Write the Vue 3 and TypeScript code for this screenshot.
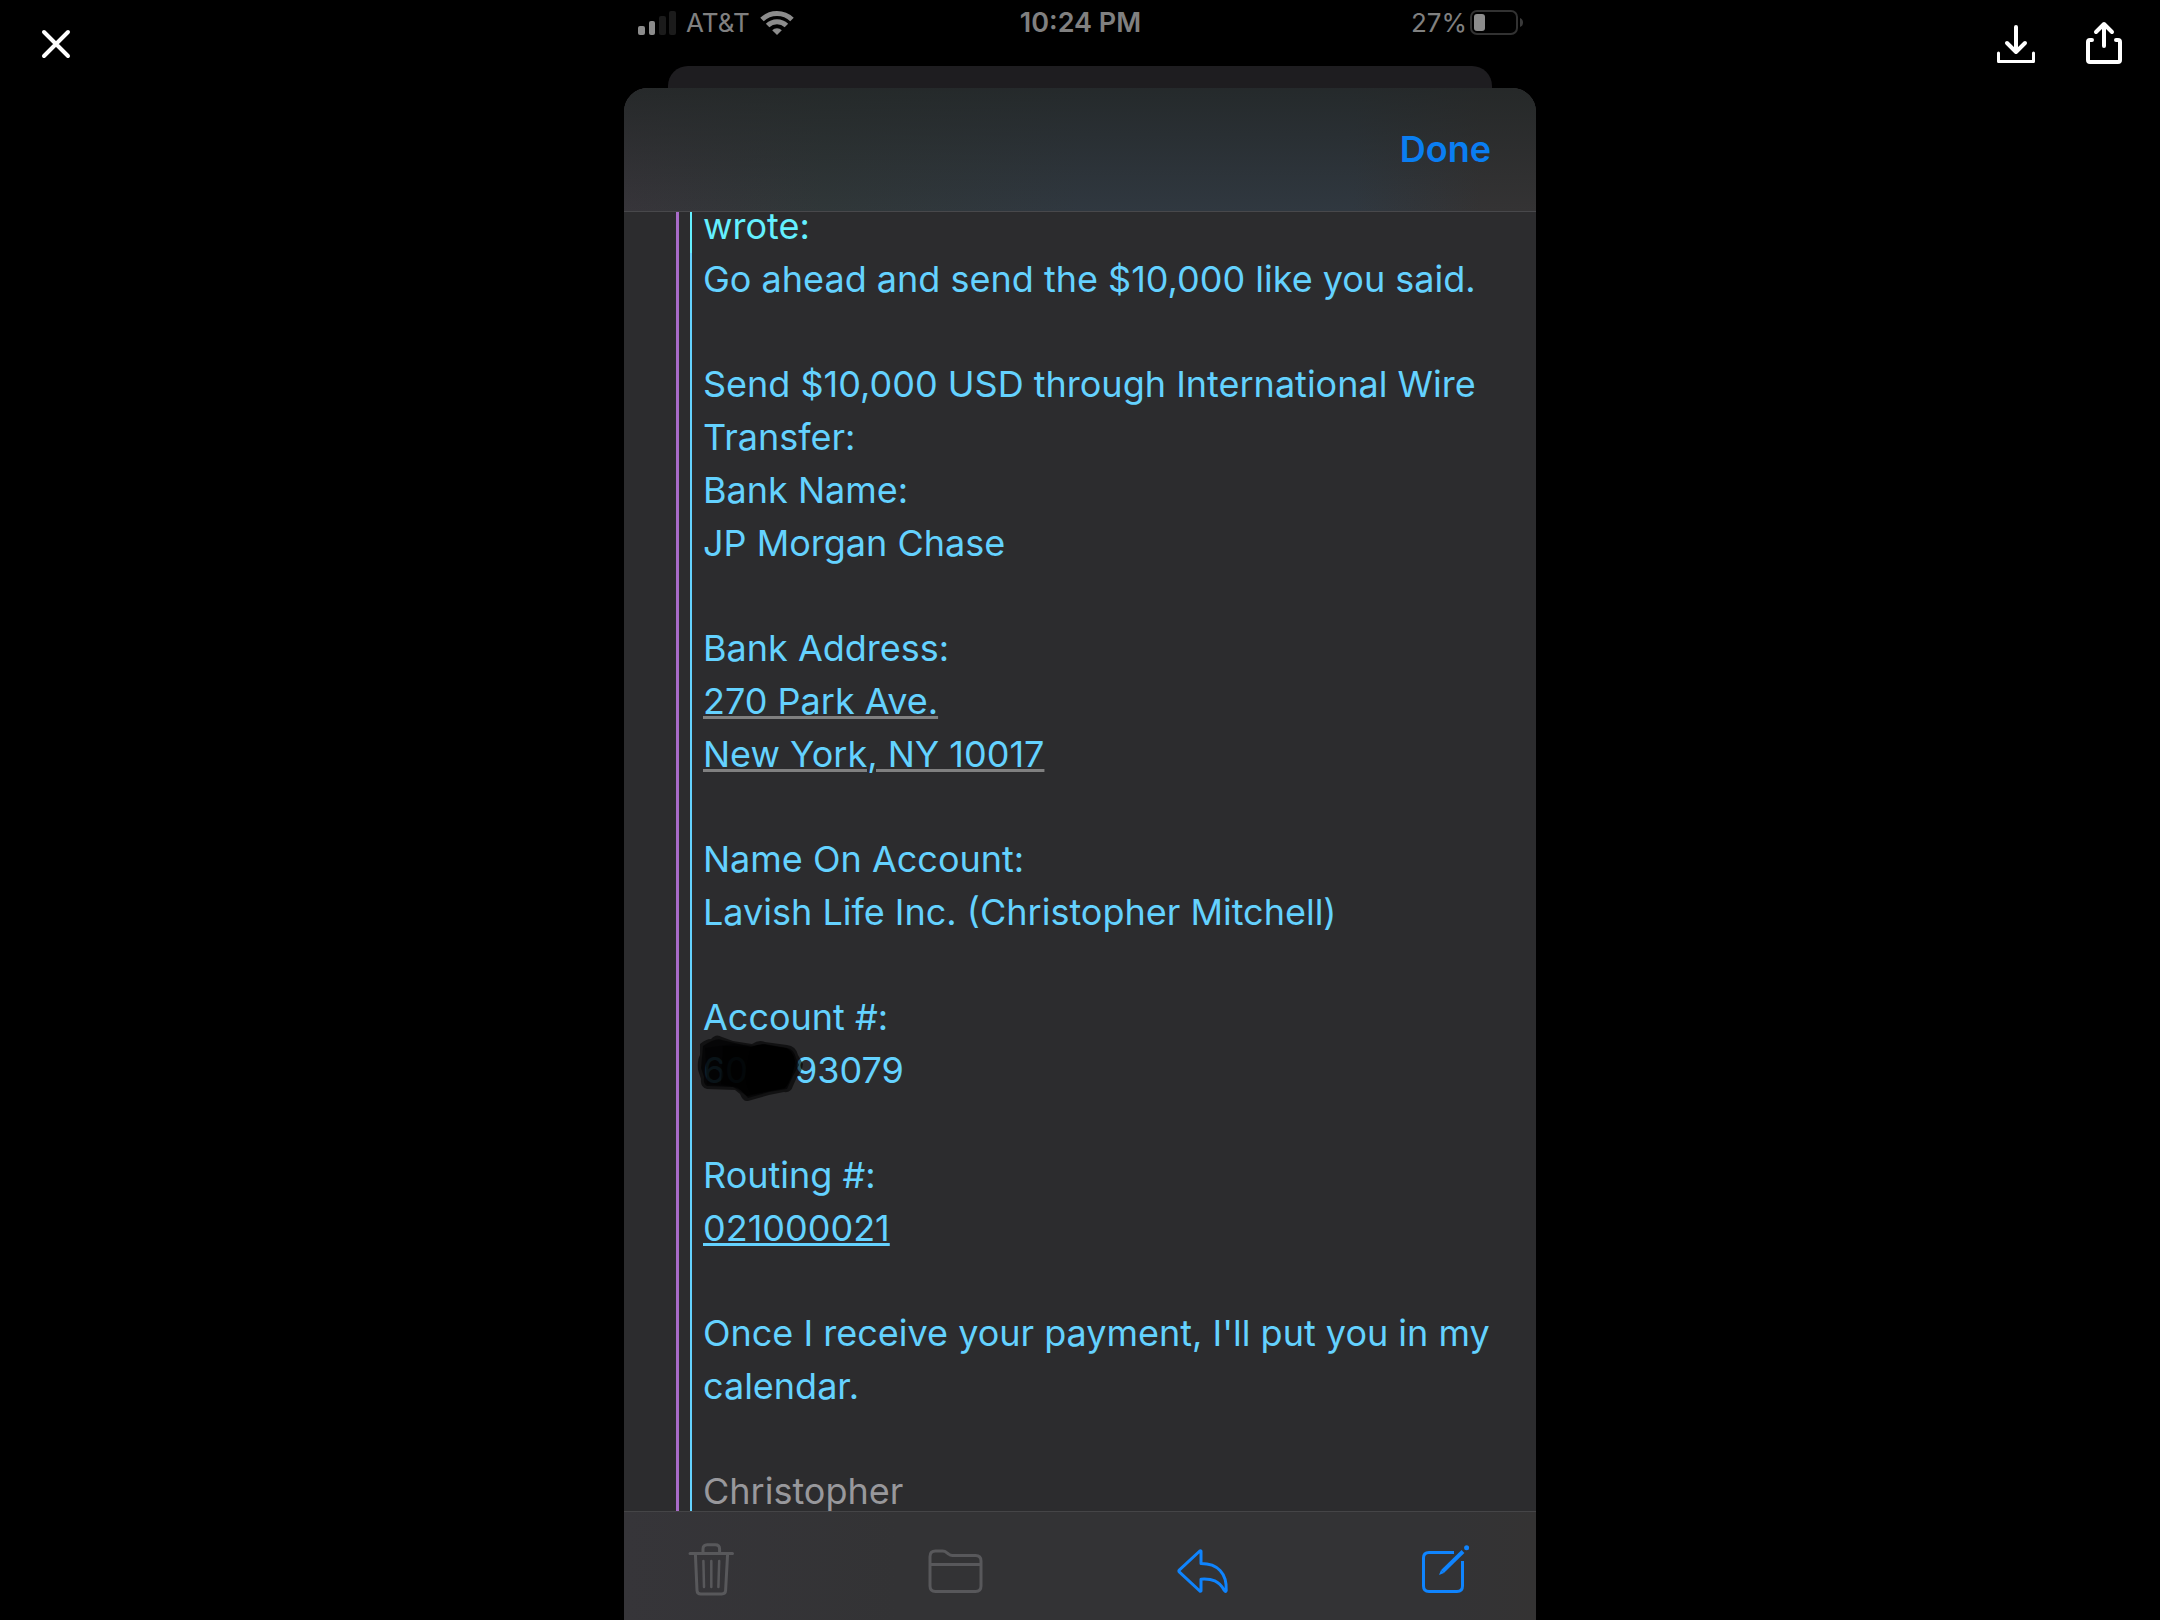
<script setup lang="ts">
interface Line {
  text: string
  kind?: 'address' | 'number' | 'redacted' | 'signature'
}

// Each stanza is a run of lines; an empty line separates two stanzas.
const stanzas: Line[][] = [
  [{ text: 'Go ahead and send the $10,000 like you said.' }],
  [
    { text: 'Send $10,000 USD through International Wire Transfer:' },
    { text: 'Bank Name:' },
    { text: 'JP Morgan Chase' },
  ],
  [
    { text: 'Bank Address:' },
    { text: '270 Park Ave.', kind: 'address' },
    { text: 'New York, NY 10017', kind: 'address' },
  ],
  [
    { text: 'Name On Account:' },
    { text: 'Lavish Life Inc. (Christopher Mitchell)' },
  ],
  [
    { text: 'Account #:' },
    { text: '93079', kind: 'redacted' },
  ],
  [
    { text: 'Routing #:' },
    { text: '021000021', kind: 'number' },
  ],
  [{ text: "Once I receive your payment, I'll put you in my calendar." }],
  [{ text: 'Christopher', kind: 'signature' }],
]
</script>

<template>
  <div class="viewer">
    <div class="side">
      <button class="tool" type="button" aria-label="Close">
        <svg width="40" height="44" viewBox="0 0 40 44" fill="none" stroke="#fff" stroke-width="4" stroke-linecap="round">
          <path d="M8 10l24 24M32 10L8 34" />
        </svg>
      </button>
    </div>

    <main class="phone">
      <div class="status">
        <div class="status-left">
          <svg width="38" height="26" viewBox="0 0 38 26">
            <rect x="0" y="16" width="7" height="9" rx="2" fill="#8c8c8c" />
            <rect x="11" y="11" width="6" height="14" rx="2" fill="#8c8c8c" />
            <rect x="21" y="6" width="7" height="19" rx="2" fill="#1b1b1b" />
            <rect x="31" y="1" width="7" height="24" rx="2" fill="#1b1b1b" />
          </svg>
          <span class="carrier">AT&amp;T</span>
          <svg width="34" height="26" viewBox="0 0 34 26" fill="none" stroke="#8c8c8c" stroke-width="5">
            <path d="M2 9.500A21.500 21.500 0 0 1 32 9.500" />
            <path d="M7.600 15.500A13.500 13.500 0 0 1 26.400 15.500" />
            <path d="M17 25l-4.800-4.800a6.800 6.800 0 0 1 9.600 0z" fill="#8c8c8c" stroke="none" />
          </svg>
        </div>
        <span class="clock">10:24 PM</span>
        <div class="status-right">
          <span>27%</span>
          <svg width="54" height="26" viewBox="0 0 54 26">
            <rect x="2" y="1" width="46" height="23" rx="6" fill="none" stroke="#323232" stroke-width="2" />
            <rect x="5" y="4" width="11" height="17" rx="3" fill="#8c8c8c" />
            <path d="M51 8q3 1 3 4.500t-3 4.500z" fill="#3a3a3a" />
          </svg>
        </div>
      </div>

      <div class="back-card"></div>

      <section class="sheet">
        <header class="bar">
          <button class="done" type="button">Done</button>
        </header>

        <div class="scroller">
          <blockquote class="outer">
            <div class="inner attribution"><p>wrote:</p></div>
            <div class="inner">
              <div v-for="(stanza, i) in stanzas" :key="i" class="stanza">
                <p v-for="line in stanza" :key="line.text" :class="line.kind">
                  <a v-if="line.kind === 'address'" href="#">{{ line.text }}</a>
                  <a v-else-if="line.kind === 'number'" href="#">{{ line.text }}</a>
                  <template v-else-if="line.kind === 'redacted'">
                    <span class="hidden-digits">60<svg class="scribble" width="110" height="70" viewBox="0 0 110 70">
                      <path opacity=".6" d="M3 10Q9 5 14 5Q19-1 25 3L36 7L55 10Q62 5 68 8L90 11Q99 12 101 21L106 30Q105 38 100 43L96 52Q94 59 87 58L72 61L51 67Q46 68 43 60L38 56L10 55Q3 53 4 45L1 36Q0 26 3 21Z" />
                      <path opacity=".6" d="M6 12Q19 3 25 6L55 13L68 10L90 14Q97 15 99 24L102 31L96 42L90 55L72 58L51 64L44 56L36 53L10 52Q6 50 7 43L4 34Z" />
                      <path opacity=".4" d="M8 14L36 10L90 14L99 30L90 52L50 62L36 53L10 50Z" />
                      <path opacity=".6" d="M26 12L60 13L88 16L98 27L88 54L50 62L40 53L24 50Z" />
                      <path d="M54 13Q64 9 70 11L88 14Q96 16 98 27Q96 44 88 54L54 60Q46 46 50 30Z" />
                    </svg></span>{{ line.text }}
                  </template>
                  <template v-else>{{ line.text }}</template>
                </p>
              </div>
            </div>
          </blockquote>
        </div>

        <nav class="toolbar">
          <button class="action" type="button" aria-label="Delete" disabled>
            <svg width="56" height="56" viewBox="0 0 56 56" fill="none" stroke="#58585b" stroke-width="3" stroke-linecap="round" stroke-linejoin="round">
              <path d="M7 11.500H49.500M20 11V7q0-4.300 4.300-4.300h8Q36.600 2.700 36.600 7V11" />
              <path d="M12.400 12L14 48.500Q14.200 52 17.800 52H38.800Q42.400 52 42.600 48.500L44.600 12" />
              <path stroke-width="2.500" d="M20.400 19L21 45M28.300 19V45M36.200 19L35.400 45" />
            </svg>
          </button>
          <button class="action" type="button" aria-label="Move to folder" disabled>
            <svg width="56" height="56" viewBox="0 0 56 56" fill="none" stroke="#58585b" stroke-width="3" stroke-linejoin="round">
              <path d="M2 44V14.500Q2 9 7.500 9H14.500Q17 9 19 10.800L20.500 12Q22.200 13.500 24.500 13.500H47.500Q53 13.500 53 19V44Q53 49.500 47.500 49.500H7.500Q2 49.500 2 44ZM2 22.400H53" />
            </svg>
          </button>
          <button class="action" type="button" aria-label="Reply">
            <svg width="56" height="56" viewBox="0 0 56 56" fill="none" stroke="#0f84fe" stroke-width="3" stroke-linejoin="round">
              <path d="M28 9.200Q27.500 8.500 26.800 9L6.500 27.800Q5.200 29 6.500 30.200L26.800 49Q27.500 49.500 28 48.800V37.200C39 36.500 46 38.800 51.200 48.200Q52.600 50.500 53.200 48.500C54 31 44.500 21.500 28 21.500Z" />
            </svg>
          </button>
          <button class="action" type="button" aria-label="Compose">
            <svg width="56" height="56" viewBox="0 0 56 56" fill="none" stroke="#0f84fe" stroke-width="3">
              <path d="M36 10.500H11Q5.500 10.500 5.500 16V44Q5.500 49.500 11 49.500H39Q44.500 49.500 44.500 44V19" />
              <path d="M24.500 29.500L45 9.500" stroke-width="4" />
              <path d="M23 28L21 33L26 31Z" fill="#0f84fe" stroke="none" />
              <circle cx="48.600" cy="5.800" r="2.500" fill="#0f84fe" stroke="none" />
            </svg>
          </button>
        </nav>
      </section>
    </main>

    <div class="side side-right">
      <button class="tool" type="button" aria-label="Download">
        <svg width="40" height="44" viewBox="0 0 40 44" fill="none" stroke="#fff" stroke-width="4" stroke-linecap="round" stroke-linejoin="round">
          <path d="M20 5V30M11 21L20 30L29 21" />
          <path stroke-width="3" d="M2.500 31V39.500H37.500V31" />
        </svg>
      </button>
      <button class="tool" type="button" aria-label="Share">
        <svg width="40" height="44" viewBox="0 0 40 44" fill="none" stroke="#fff" stroke-width="4" stroke-linecap="round" stroke-linejoin="round">
          <path d="M20 24V2M12 10L20 2L28 10" />
          <path d="M8 18H6Q4 18 4 20V38Q4 40 6 40H34Q36 40 36 38V20Q36 18 34 18H32" />
        </svg>
      </button>
    </div>
  </div>
</template>

<style>
body {
  margin: 0;
  background: #000;
}
</style>

<style scoped>
.viewer {
  display: grid;
  grid-template-columns: 1fr minmax(0, 912px) 1fr;
  height: 100vh;
  background: #000;
  color: #64d2ff;
  font-family: Inter, "Liberation Sans", sans-serif;
  font-size: 36px;
  line-height: 53px;
}

button {
  display: block;
  margin: 0;
  padding: 0;
  border: 0;
  background: none;
  font: inherit;
}

svg {
  display: block;
  overflow: visible;
}

.side {
  display: flex;
  align-items: flex-start;
  padding: 22px 36px;
}

.side-right {
  justify-content: flex-end;
  gap: 48px;
}

.tool {
  height: 44px;
}

.phone {
  display: flex;
  flex-direction: column;
  min-width: 0;
  min-height: 0;
}

.status {
  display: grid;
  grid-template-columns: 1fr auto 1fr;
  align-items: center;
  flex: none;
  height: 46px;
  margin-bottom: 20px;
  padding: 0 13px 0 14px;
  color: #808080;
  font-size: 26px;
  line-height: 32px;
}

.status-left,
.status-right {
  display: flex;
  align-items: center;
}

.status-left {
  gap: 10px;
}

.status-right {
  justify-content: flex-end;
  gap: 2px;
}

.clock {
  font-size: 27px;
  font-weight: 600;
}

.back-card {
  flex: none;
  height: 22px;
  margin: 0 44px;
  border-radius: 20px 20px 0 0;
  background: #1e1d20;
}

.sheet {
  display: flex;
  flex: 1;
  flex-direction: column;
  min-height: 0;
  overflow: hidden;
  border-radius: 24px 24px 0 0;
  background: #2c2c2e;
}

.bar {
  display: flex;
  flex: none;
  align-items: center;
  justify-content: flex-end;
  height: 123px;
  padding: 0 45px;
  border-bottom: 1px solid #48484b;
  background:
    linear-gradient(to top, transparent, rgba(34, 38, 38, 0.8)),
    linear-gradient(to right, #37353a, #303739 22%, #303840 50%, #303840 80%, #343334 94%);
}

.done {
  color: #0a7ef2;
  font-weight: 600;
}

.scroller {
  flex: 1;
  min-height: 0;
  overflow: hidden;
}

.outer {
  margin: -12px 0 0 52px;
  padding-left: 11px;
  border-left: 3px solid #a86bc8;
}

.inner {
  padding: 0 40px 0 11px;
  border-left: 2px solid #64d2ff;
}

.attribution {
  border-color: #64f0ff;
  color: #64f0ff;
}

p {
  margin: 0;
}

.stanza + .stanza {
  padding-top: 52px;
}

a {
  color: inherit;
  text-decoration: underline 3px;
  text-underline-offset: 2px;
}

.address a {
  text-decoration-color: #808080;
}

.signature {
  color: #98989c;
}

.hidden-digits {
  display: inline-block;
  position: relative;
  width: 92px;
}

.scribble {
  position: absolute;
  top: -10px;
  left: -6px;
}

.toolbar {
  display: flex;
  flex: none;
  justify-content: space-between;
  padding: 30px 62px 22px 59px;
  border-top: 1px solid #454547;
  background: linear-gradient(to right, #363539, #333335 30%, #333335 90%, #343333);
}
</style>
